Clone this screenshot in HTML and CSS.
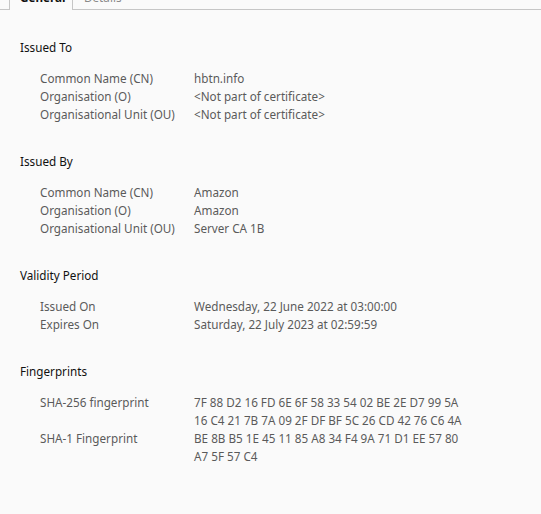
FILE: index.html
```html
<!DOCTYPE html>
<html>
<head>
<meta charset="utf-8">
<link rel="stylesheet" href="styles.css">
</head>
<body>
<div class="tabbar">
  <div class="tab active"><span>General</span></div>
  <div class="tab"><span>Details</span></div>
</div>
<div class="content">
  <section class="sect">
    <h2 class="head">Issued To</h2>
    <div class="grid">
      <div class="lbl">Common Name (CN)</div><div class="val">hbtn.info</div>
      <div class="lbl">Organisation (O)</div><div class="val">&lt;Not part of certificate&gt;</div>
      <div class="lbl">Organisational Unit (OU)</div><div class="val">&lt;Not part of certificate&gt;</div>
    </div>
  </section>
  <section class="sect">
    <h2 class="head">Issued By</h2>
    <div class="grid">
      <div class="lbl">Common Name (CN)</div><div class="val">Amazon</div>
      <div class="lbl">Organisation (O)</div><div class="val">Amazon</div>
      <div class="lbl">Organisational Unit (OU)</div><div class="val">Server CA 1B</div>
    </div>
  </section>
  <section class="sect">
    <h2 class="head">Validity Period</h2>
    <div class="grid">
      <div class="lbl">Issued On</div><div class="val">Wednesday, 22 June 2022 at 03:00:00</div>
      <div class="lbl">Expires On</div><div class="val">Saturday, 22 July 2023 at 02:59:59</div>
    </div>
  </section>
  <section class="sect">
    <h2 class="head">Fingerprints</h2>
    <div class="grid">
      <div class="lbl">SHA-256 fingerprint</div><div class="val">7F 88 D2 16 FD 6E 6F 58 33 54 02 BE 2E D7 99 5A<br>16 C4 21 7B 7A 09 2F DF BF 5C 26 CD 42 76 C6 4A</div>
      <div class="lbl">SHA-1 Fingerprint</div><div class="val">BE 8B B5 1E 45 11 85 A8 34 F4 9A 71 D1 EE 57 80<br>A7 5F 57 C4</div>
    </div>
  </section>
</div>
</body>
</html>
```
FILE: styles.css
```css
html, body {
  margin: 0;
  padding: 0;
  background: #fafafa;
}
body {
  font-family: "Noto Sans", "Open Sans", sans-serif;
  font-size: 11.7px;
  width: 541px;
  height: 514px;
  overflow: hidden;
}
.tabbar {
  display: flex;
  align-items: flex-end;
  height: 9px;
  border-bottom: 1px solid #c6c6c6;
  position: relative;
}
.tab {
  height: 10px;
  margin-bottom: -1px;
  overflow: hidden;
  display: flex;
  align-items: flex-end;
  box-sizing: border-box;
  padding: 0 11px 6px 11px;
  line-height: 14px;
  color: #8a8a8a;
}
.tab span {
  display: block;
}
.tab.active {
  margin-left: 9px;
  width: 64px;
  border-left: 1px solid #c6c6c6;
  border-right: 1px solid #c6c6c6;
  background: #fafafa;
  color: #111;
  font-weight: bold;
  padding-left: 10px;
}
.content {
  padding: 0 0 0 20px;
}
.sect {
  margin-top: 29px;
}
.sect:first-child {
  margin-top: 28px;
}
.head {
  margin: 0;
  font-size: 11.7px;
  font-weight: normal;
  line-height: 18px;
  color: #111;
}
.grid {
  margin-top: 13px;
  padding-left: 20px;
  display: grid;
  grid-template-columns: 154px auto;
  line-height: 18px;
  color: #5a5a5a;
}
```
